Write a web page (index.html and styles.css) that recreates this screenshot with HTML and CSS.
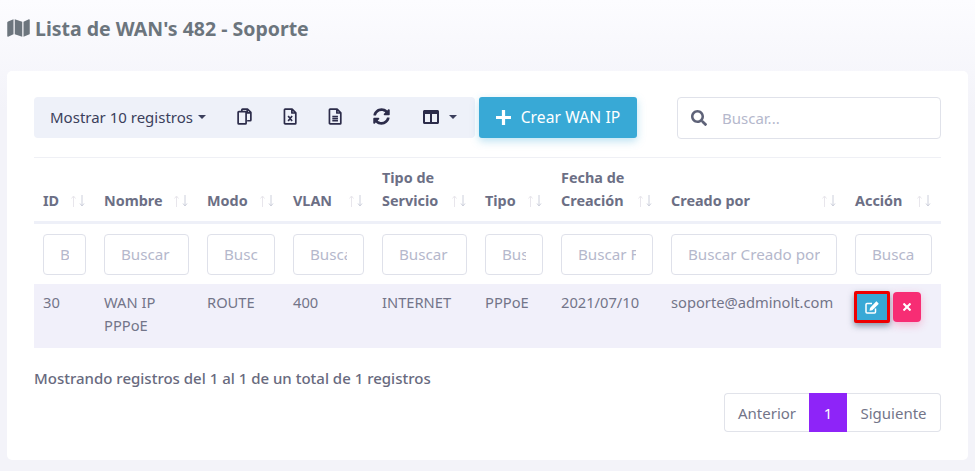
FILE: index.html
```html
<!DOCTYPE html>
<html lang="es">
<head>
<meta charset="utf-8">
<title>Lista de WAN's</title>
<link rel="stylesheet" href="styles.css">
</head>
<body>
<svg class="defs" width="0" height="0">
  <symbol id="sort" viewBox="0 0 14 12">
    <path class="s-up" d="M2.500 12V1M.5 3.500L2.500 1l2 2.500"/>
    <path class="s-down" d="M11 0v11M9 8.500l2 2.500 2-2.500"/>
  </symbol>
</svg>
<main class="page">
  <h1 class="title">
    <svg class="title-icon" viewBox="0 0 576 512"><path d="M0 117.66v346.32c0 11.32 11.43 19.06 21.94 14.86L160 416V32L20.12 87.95A32.006 32.006 0 0 0 0 117.66zM192 416l192 64V96L192 32v384zM554.06 33.16L416 96v384l139.88-55.95A31.996 31.996 0 0 0 576 394.34V48.02c0-11.32-11.43-19.06-21.94-14.86z"/></svg>
    <span>Lista de WAN's 482 - Soporte</span>
  </h1>
  <section class="card">
    <div class="toolbar">
      <div class="btn-group">
        <button class="tool tool-length">Mostrar 10 registros<i class="caret"></i></button>
        <button class="tool tool-icon">
          <svg class="ico" viewBox="0 0 14 16"><path d="M4.500 3.500V1.700c0-.4.3-.7.7-.7h4.600L13 4.200v7.100c0 .4-.3.7-.7.7H9.500M9.500 1v3.500H13M1.700 3.500h6.100c.4 0 .7.3.7.7v10.100c0 .4-.3.7-.7.7H1.700c-.4 0-.7-.3-.7-.7V4.200c0-.4.3-.7.7-.7z"/></svg>
        </button>
        <button class="tool tool-icon">
          <svg class="ico" viewBox="0 0 14 16"><path d="M2 1h6.500L12 4.500v9.800c0 .4-.3.7-.7.7H2c-.4 0-.7-.3-.7-.7V1.700C1.300 1.300 1.600 1 2 1zM8.300 1v3.700H12M4.800 7.500l3.700 4.700M8.500 7.500l-3.700 4.700"/></svg>
        </button>
        <button class="tool tool-icon">
          <svg class="ico" viewBox="0 0 14 16"><path d="M2 1h6.500L12 4.500v9.800c0 .4-.3.7-.7.7H2c-.4 0-.7-.3-.7-.7V1.700C1.300 1.300 1.600 1 2 1zM8.300 1v3.700H12M4 8h5.300M4 10h5.300M4 12h5.300"/></svg>
        </button>
        <button class="tool tool-icon">
          <svg class="ico-solid" viewBox="0 0 512 512"><path d="M370.72 133.28C339.458 104.008 298.888 87.962 255.848 88c-77.458.068-144.328 53.178-162.791 126.85-1.344 5.363-6.122 9.15-11.651 9.15H24.103c-7.498 0-13.194-6.807-11.807-14.176C33.933 94.924 134.813 8 256 8c66.448 0 126.791 26.136 171.315 68.685L463.03 40.97C478.149 25.851 504 36.559 504 57.941V192c0 13.255-10.745 24-24 24H345.941c-21.382 0-32.09-25.851-16.971-40.971l41.75-41.749zM32 296h134.059c21.382 0 32.09 25.851 16.971 40.971l-41.75 41.75c31.262 29.273 71.835 45.319 114.876 45.28 77.418-.07 144.315-53.144 162.787-126.849 1.344-5.363 6.122-9.15 11.651-9.15h57.304c7.498 0 13.194 6.807 11.807 14.176C478.067 417.076 377.187 504 256 504c-66.448 0-126.791-26.136-171.315-68.685L48.97 471.03C33.851 486.149 8 475.441 8 454.059V320c0-13.255 10.745-24 24-24z"/></svg>
        </button>
        <button class="tool tool-cols">
          <svg class="ico-cols" viewBox="0 0 16 14"><path fill-rule="evenodd" d="M1.500 0h13c.8 0 1.500.7 1.500 1.500v11c0 .8-.7 1.500-1.500 1.500h-13C.7 14 0 13.300 0 12.500v-11C0 .7.700 0 1.500 0zM2 4v8h5V4zm7 0v8h5V4z"/></svg>
          <i class="caret caret-cols"></i>
        </button>
      </div>
      <button class="create">
        <svg class="create-icon" viewBox="0 0 14 14"><path d="M5.500 0h3v5.500H14v3H8.500V14h-3V8.500H0v-3h5.500z"/></svg>
        <span>Crear WAN IP</span>
      </button>
      <label class="search">
        <svg class="search-icon" viewBox="0 0 512 512"><path d="M505 442.700L405.300 343c-4.500-4.500-10.600-7-17-7H372c27.600-35.300 44-79.700 44-128C416 93.100 322.900 0 208 0S0 93.100 0 208s93.100 208 208 208c48.300 0 92.700-16.400 128-44v16.300c0 6.400 2.500 12.500 7 17l99.700 99.700c9.400 9.400 24.600 9.400 33.900 0l28.300-28.300c9.400-9.400 9.400-24.600.1-34zM208 336c-70.700 0-128-57.200-128-128 0-70.700 57.200-128 128-128 70.700 0 128 57.200 128 128 0 70.700-57.200 128-128 128z"/></svg>
        <input class="search-input" type="text" placeholder="Buscar...">
      </label>
    </div>

    <table class="table">
      <colgroup>
        <col class="c-id"><col class="c-nombre"><col class="c-modo"><col class="c-vlan"><col class="c-serv"><col class="c-tipo"><col class="c-fecha"><col class="c-creado"><col class="c-accion">
      </colgroup>
      <thead>
        <tr class="head-row">
          <th><div class="th-in"><span>ID</span><svg class="sort"><use href="#sort"/></svg></div></th>
          <th><div class="th-in"><span>Nombre</span><svg class="sort"><use href="#sort"/></svg></div></th>
          <th><div class="th-in"><span>Modo</span><svg class="sort"><use href="#sort"/></svg></div></th>
          <th><div class="th-in"><span>VLAN</span><svg class="sort"><use href="#sort"/></svg></div></th>
          <th><div class="th-in"><span>Tipo de<br>Servicio</span><svg class="sort"><use href="#sort"/></svg></div></th>
          <th><div class="th-in"><span>Tipo</span><svg class="sort"><use href="#sort"/></svg></div></th>
          <th><div class="th-in"><span>Fecha de<br>Creación</span><svg class="sort"><use href="#sort"/></svg></div></th>
          <th><div class="th-in"><span>Creado por</span><svg class="sort"><use href="#sort"/></svg></div></th>
          <th><div class="th-in"><span>Acción</span><svg class="sort"><use href="#sort"/></svg></div></th>
        </tr>
        <tr class="filter-row">
          <td><input class="filter" placeholder="Buscar ID"></td>
          <td><input class="filter" placeholder="Buscar"></td>
          <td><input class="filter" placeholder="Buscar Modo"></td>
          <td><input class="filter" placeholder="Buscar VLAN"></td>
          <td><input class="filter" placeholder="Buscar"></td>
          <td><input class="filter" placeholder="Buscar"></td>
          <td><input class="filter" placeholder="Buscar Fecha"></td>
          <td><input class="filter" placeholder="Buscar Creado por"></td>
          <td><input class="filter" placeholder="Buscar"></td>
        </tr>
      </thead>
      <tbody>
        <tr class="data-row">
          <td>30</td>
          <td>WAN IP<br>PPPoE</td>
          <td>ROUTE</td>
          <td>400</td>
          <td>INTERNET</td>
          <td>PPPoE</td>
          <td>2021/07/10</td>
          <td>soporte@adminolt.com</td>
          <td class="actions">
            <div class="actions-in">
              <button class="act act-edit">
                <svg viewBox="0 0 14 13"><path class="edit-box" d="M10.500 7.500v3.500c0 .6-.4 1-1 1H2c-.6 0-1-.4-1-1V3.500c0-.6.4-1 1-1h5"/><path class="edit-pen" d="M11.600.4l1.800 1.800c.3.300.3.7 0 1L7.300 9.300 4.500 9.800 5 7l6.100-6.600c.2-.2.300-.2.500 0z"/></svg>
              </button>
              <button class="act act-del">
                <svg viewBox="0 0 352 512"><path d="M242.720 256l100.070-100.070c12.280-12.280 12.280-32.190 0-44.480l-22.240-22.240c-12.280-12.280-32.190-12.280-44.480 0L176 189.280 75.930 89.210c-12.280-12.280-32.190-12.280-44.480 0L9.210 111.450c-12.280 12.280-12.280 32.190 0 44.480L109.280 256 9.210 356.070c-12.280 12.280-12.280 32.190 0 44.480l22.240 22.240c12.280 12.280 32.200 12.280 44.480 0L176 322.720l100.070 100.070c12.280 12.280 32.200 12.280 44.480 0l22.240-22.240c12.280-12.280 12.280-32.190 0-44.480L242.720 256z"/></svg>
              </button>
            </div>
          </td>
        </tr>
      </tbody>
    </table>

    <p class="info">Mostrando registros del 1 al 1 de un total de 1 registros</p>
    <nav class="pager">
      <a class="pg pg-first">Anterior</a>
      <a class="pg pg-active">1</a>
      <a class="pg pg-last">Siguiente</a>
    </nav>
  </section>
</main>
</body>
</html>
```
FILE: styles.css
```css
* { box-sizing: border-box; }
html, body { margin: 0; padding: 0; }
body {
  width: 975px;
  height: 471px;
  overflow: hidden;
  font-family: "Noto Sans", "Open Sans", sans-serif;
  background: linear-gradient(180deg, #fcfcff 0, #f3f3f9 110px, #f3f3f9 100%);
  color: #6e6b7b;
}
.defs { display: block; height: 0; }
.s-up { fill: none; stroke: #e8e6ec; stroke-width: 1; }
.s-down { fill: none; stroke: #cdd0dc; stroke-width: 1; }
.page { padding: 16px 7px 0; }
.title {
  margin: 0;
  display: flex;
  align-items: center;
  gap: 5px;
  height: 24px;
  font-size: 19.500px;
  font-weight: 700;
  color: #6c757d;
}
.title-icon { width: 23px; height: 20px; fill: #6c757d; }
.card {
  margin-top: 31px;
  height: 389px;
  background: #fff;
  border-radius: 5px;
  padding: 26px 27px 0;
}
.toolbar { display: flex; align-items: center; height: 41px; }
.btn-group {
  display: flex;
  height: 41px;
  background: #eef1f9;
  border-radius: 4px;
  width: 441px;
}
.tool {
  border: 0;
  background: transparent;
  font: inherit;
  font-size: 15px;
  color: #3b3f5c;
  height: 41px;
  display: flex;
  align-items: center;
  justify-content: center;
  padding: 0 0 2px;
}
.tool-length { width: 188px; }
.tool-icon { width: 45.500px; }
.tool-cols { width: 71px; gap: 8px; }
.caret {
  display: inline-block;
  margin-left: 5px;
  border-top: 4px solid #3b3f5c;
  border-left: 4px solid transparent;
  border-right: 4px solid transparent;
}
.caret-cols { margin-left: 2px; }
.ico { width: 15px; height: 17px; fill: none; stroke: #2c2c4a; stroke-width: 1.600; stroke-linejoin: round; }
.ico-solid { width: 17px; height: 17px; fill: #2c2c4a; }
.ico-cols { width: 16px; height: 14px; fill: #2c2c4a; }
.create {
  margin-left: 4px;
  width: 158px;
  height: 41px;
  border: 0;
  border-radius: 3px;
  background: #38a9d6;
  color: #fff;
  font: inherit;
  font-size: 15.600px;
  letter-spacing: .1px;
  display: flex;
  align-items: center;
  justify-content: center;
  gap: 10px;
  padding: 0 0 1px;
  box-shadow: 0 3px 8px rgba(56, 169, 214, .35);
}
.create-icon { width: 15px; height: 15px; fill: #fff; }
.search {
  margin-left: 40px;
  width: 264px;
  height: 42px;
  border: 1px solid #e0e2ea;
  border-radius: 4px;
  display: flex;
  align-items: center;
  padding-left: 13px;
  gap: 13px;
}
.search-icon { width: 16px; height: 16px; fill: #5e6278; flex: none; }
.search-input {
  border: 0;
  outline: 0;
  flex: 1;
  min-width: 0;
  font: inherit;
  font-size: 15px;
  background: transparent;
}
input::placeholder { color: #b5b8cc; opacity: 1; }
.table {
  margin-top: 19px;
  width: 907px;
  border-collapse: collapse;
  table-layout: fixed;
  font-size: 14.700px;
  border-top: 1px solid #eff0f5;
}
.c-id { width: 61px; }
.c-nombre { width: 103px; }
.c-modo { width: 86px; }
.c-vlan { width: 89px; }
.c-serv { width: 103px; }
.c-tipo { width: 76px; }
.c-fecha { width: 110px; }
.c-creado { width: 184px; }
.c-accion { width: 95px; }
.head-row th {
  height: 65px;
  padding: 7px 9px 9px;
  vertical-align: bottom;
  text-align: left;
  font-weight: 700;
  font-size: 14.400px;
  line-height: 23px;
  color: #6c6f85;
  border-bottom: 3px solid #eef0f8;
}
.th-in { display: flex; justify-content: space-between; align-items: flex-end; }
.sort { flex: none; width: 14px; height: 12px; margin-bottom: 5px; margin-right: 1px; }
.filter-row td { height: 60px; padding: 10px 9px 9px; }
.filter {
  width: 100%;
  height: 41px;
  border: 1px solid #dfe1ea;
  border-radius: 4px;
  padding: 0 16px 2px;
  font: inherit;
  font-size: 15.200px;
  outline: 0;
  background: #fff;
}
.data-row { background: #f1f0fa; }
.data-row td {
  height: 64px;
  padding: 7px 9px;
  vertical-align: top;
  line-height: 23px;
  color: #737589;
}
.data-row .actions { padding-left: 8px; }
.actions-in { display: flex; gap: 3px; align-items: center; }
.act {
  border: 0;
  width: 28px;
  height: 30px;
  border-radius: 4px;
  padding: 0;
  display: flex;
  align-items: center;
  justify-content: center;
}
.act-edit {
  width: 36px;
  height: 32px;
  background: #38a9d6;
  border: 3px solid #ee0000;
  border-radius: 2px;
  box-shadow: 0 3px 6px rgba(30, 60, 90, .5);
}
.act-edit svg { width: 14px; height: 13px; fill: none; }
.edit-box { stroke: #fff; stroke-width: 1.500; }
.edit-pen { fill: #fff; }
.act-del { background: #f72d74; box-shadow: 0 3px 8px rgba(247, 45, 116, .3); }
.act-del svg { width: 8px; height: 12px; fill: #fff; }
.info {
  margin: 19px 0 0;
  font-size: 15px;
  line-height: 22px;
  font-weight: 500;
  color: #686a7e;
}
.pager { display: flex; justify-content: flex-end; margin-top: 4px; }
.pg {
  height: 39px;
  display: flex;
  align-items: center;
  justify-content: center;
  font-size: 15px;
  color: #737589;
  border: 1px solid #e1e3ea;
}
.pg-first { width: 85px; border-right: 0; border-radius: 4px 0 0 4px; }
.pg-active { width: 38px; background: #8e24f8; border-color: #8e24f8; color: #fff; }
.pg-last { width: 94px; border-left: 0; border-radius: 0 4px 4px 0; }
```
